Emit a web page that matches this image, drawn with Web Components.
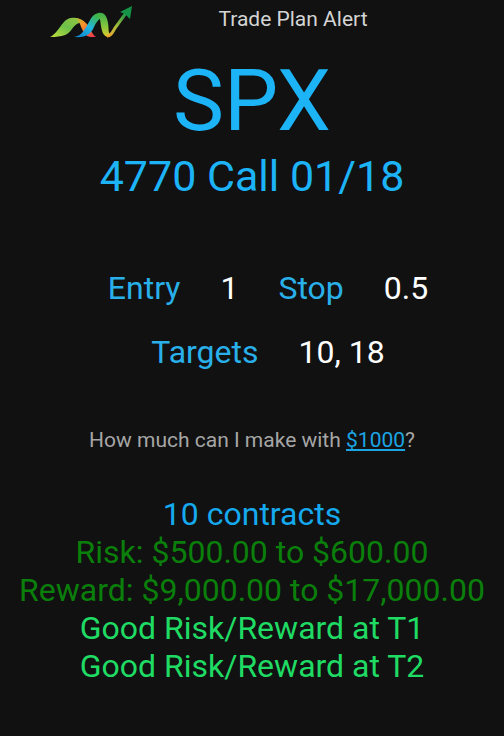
<!DOCTYPE html>
<html lang="en">
<head>
<meta charset="utf-8">
<meta name="viewport" content="width=device-width, initial-scale=1">
<title>Trade Plan Alert</title>
<style>
  body {
    margin: 0;
    min-height: 100vh;
    background: #111;
    font-family: Roboto, "Liberation Sans", sans-serif;
  }
</style>
</head>
<body>
<trade-plan>
  <alert-header slot="header">Trade Plan Alert</alert-header>
  <trade-title slot="title" symbol="SPX">4770 Call 01/18</trade-title>
  <plan-row slot="levels">
    <plan-level label="Entry">1</plan-level>
    <plan-level label="Stop">0.5</plan-level>
  </plan-row>
  <plan-row slot="levels">
    <plan-level label="Targets">10, 18</plan-level>
  </plan-row>
  <profit-question slot="question" amount="$1000">How much can I make with</profit-question>
  <result-line>10 contracts</result-line>
  <result-line kind="range">Risk: $500.00 to $600.00</result-line>
  <result-line kind="range">Reward: $9,000.00 to $17,000.00</result-line>
  <result-line kind="good">Good Risk/Reward at T1</result-line>
  <result-line kind="good">Good Risk/Reward at T2</result-line>
</trade-plan>

<script>
class BaseElement extends HTMLElement {
  constructor() {
    super();
    const template = document.createElement("template");
    template.innerHTML = this.constructor.markup;
    this.attachShadow({ mode: "open" });
    this.shadowRoot.appendChild(template.content.cloneNode(true));
  }

  // copies an attribute into the element with the same id
  fill(name) {
    this.shadowRoot.getElementById(name).textContent = this.getAttribute(name);
  }
}

class TradeLogo extends BaseElement {
  static markup = `
    <style>
      :host { display: block; }
      svg { display: block; }
    </style>
    <svg width="82" height="38" viewBox="0 -2 82 38" role="img" aria-label="Logo">
      <defs>
        <linearGradient id="hill" x1="0" x2="1" y1="1" y2="0">
          <stop offset="0" stop-color="#c3e03a"/>
          <stop offset=".5" stop-color="#6cc04a"/>
          <stop offset="1" stop-color="#9cc63f"/>
        </linearGradient>
        <linearGradient id="warm" x1="0" x2="1" y1="0" y2="1">
          <stop offset="0" stop-color="#a9c437"/>
          <stop offset=".35" stop-color="#f7942a"/>
          <stop offset="1" stop-color="#ee3050"/>
        </linearGradient>
        <linearGradient id="cool" x1="0" x2="1" y1="1" y2="0">
          <stop offset="0" stop-color="#087fd0"/>
          <stop offset=".45" stop-color="#23b5df"/>
          <stop offset=".8" stop-color="#3db54a"/>
        </linearGradient>
        <linearGradient id="fall" x1="0" x2="0" y1="0" y2="1">
          <stop offset="0" stop-color="#3cae4a"/>
          <stop offset=".6" stop-color="#8ac83d"/>
          <stop offset="1" stop-color="#e2c92e"/>
        </linearGradient>
        <linearGradient id="rise" x1="0" x2="1" y1="1" y2="0">
          <stop offset="0" stop-color="#f6a52c"/>
          <stop offset=".45" stop-color="#a8bd3a"/>
          <stop offset="1" stop-color="#159447"/>
        </linearGradient>
      </defs>
      <path fill="url(#hill)" d="M0 35C9 31 12 17 21 16c6-1 10 1 13 5-6-1-9 2-12 6-4 6-9 8-22 8z"/>
      <path fill="url(#warm)" d="M25 16c10 1 13 7 16 13 2 3 3 5 5 6h-5c-5 0-7-4-9-8-2-5-3-9-7-11z"/>
      <path fill="url(#cool)" d="M24 35c8-1 11-8 15-15 3-6 6-9 11-9 3 0 5 2 6 5-6-1-9 3-12 9-3 7-8 11-20 10z"/>
      <path fill="url(#fall)" d="M48 11c7-1 9 4 10 10s0 9 2 11l-1 3c-6 0-7-6-8-11-1-6-1-10-3-13z"/>
      <path fill="none" stroke="url(#rise)" stroke-width="3" d="M57 34c4 0 5-3 8-8l11-15"/>
      <path fill="#159447" d="M82 4L70 10l5 2 5 5z"/>
    </svg>
  `;
}

class AlertHeader extends BaseElement {
  static markup = `
    <style>
      :host {
        display: flex;
        align-items: center;
        height: 38px;
        padding: 0 50px;
        color: #d4d4d4;
      }
      h1 {
        flex: 1;
        margin: 0;
        font-size: 21px;
        font-weight: 400;
        line-height: 38px;
        text-align: center;
      }
    </style>
    <trade-logo></trade-logo>
    <h1><slot></slot></h1>
  `;
}

class TradeTitle extends BaseElement {
  static markup = `
    <style>
      :host {
        display: block;
        color: #1cb4f7;
        text-align: center;
      }
      h2, p {
        margin: 0;
        font-weight: 400;
      }
      h2 {
        font-size: 86px;
        line-height: 100px;
      }
      p {
        font-size: 43px;
        line-height: 50px;
      }
    </style>
    <h2 id="symbol"></h2>
    <p><slot></slot></p>
  `;

  connectedCallback() {
    this.fill("symbol");
  }
}

class PlanRow extends BaseElement {
  static markup = `
    <style>
      :host {
        display: flex;
        justify-content: center;
        gap: 40px;
        padding-left: 32px;
      }
    </style>
    <slot></slot>
  `;
}

class PlanLevel extends BaseElement {
  static markup = `
    <style>
      :host {
        display: flex;
        gap: 40px;
        font-size: 32px;
        line-height: 64px;
        color: #fff;
      }
      #label { color: #29b0ea; }
    </style>
    <span id="label"></span>
    <span><slot></slot></span>
  `;

  connectedCallback() {
    this.fill("label");
  }
}

class ProfitQuestion extends BaseElement {
  static markup = `
    <style>
      :host {
        display: block;
        color: #a6a6a6;
        font-size: 21px;
        line-height: 24px;
        text-align: center;
      }
      a {
        color: #1ca5e4;
        text-decoration-thickness: 2px;
        text-underline-offset: 2px;
        text-decoration-skip-ink: none;
      }
    </style>
    <slot></slot> <a id="amount" href="#"></a>?
  `;

  connectedCallback() {
    this.fill("amount");
  }
}

class ResultLine extends BaseElement {
  static markup = `
    <style>
      :host {
        display: block;
        color: #15a9ee;
        font-size: 32px;
        line-height: 38px;
        text-align: center;
      }
      :host([kind="range"]) { color: #0b7f0b; }
      :host([kind="good"]) { color: #1fdb64; }
    </style>
    <slot></slot>
  `;
}

class TradePlan extends BaseElement {
  static markup = `
    <style>
      :host { display: block; }
      header { margin-bottom: 13px; }
      .levels { margin: 55px 0 44px; }
      .results { margin-top: 43px; }
    </style>
    <header><slot name="header"></slot></header>
    <main>
      <slot name="title"></slot>
      <div class="levels"><slot name="levels"></slot></div>
      <slot name="question"></slot>
      <div class="results"><slot></slot></div>
    </main>
  `;
}

customElements.define("trade-logo", TradeLogo);
customElements.define("alert-header", AlertHeader);
customElements.define("trade-title", TradeTitle);
customElements.define("plan-row", PlanRow);
customElements.define("plan-level", PlanLevel);
customElements.define("profit-question", ProfitQuestion);
customElements.define("result-line", ResultLine);
customElements.define("trade-plan", TradePlan);
</script>
</body>
</html>
